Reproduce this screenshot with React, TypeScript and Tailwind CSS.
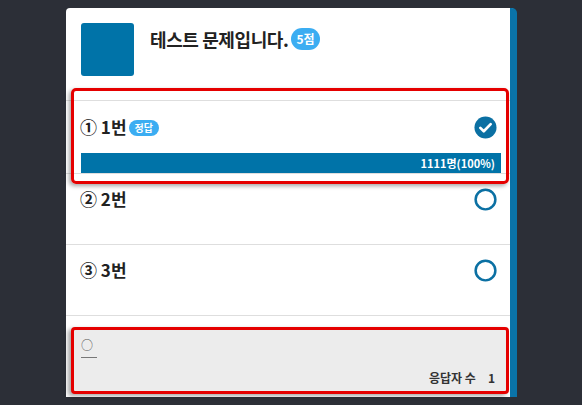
const FONT = { fontFamily: '"Noto Sans CJK KR", "Noto Sans", sans-serif' }

type Option = { no: string; label: string; correct?: boolean; count?: string }

const OPTIONS: Option[] = [
  { no: '①', label: '1번', correct: true, count: '1111명(100%)' },
  { no: '②', label: '2번' },
  { no: '③', label: '3번' },
]

function CheckCircle() {
  return (
    <svg width="23" height="23" viewBox="0 0 24 24">
      <circle cx="12" cy="12" r="11.5" fill="#0b70a3" />
      <path d="M6.6 12.4l3.6 3.5 7.2-7.4" fill="none" stroke="white" strokeWidth="2.8" strokeLinecap="round" strokeLinejoin="round" />
    </svg>
  )
}

function EmptyCircle() {
  return (
    <svg width="23" height="23" viewBox="0 0 24 24">
      <circle cx="12" cy="12" r="10.3" fill="none" stroke="#0b70a3" strokeWidth="2.6" />
    </svg>
  )
}

export default function App() {
  return (
    <div className="w-[582px] h-[405px] bg-[#2c2f37] overflow-hidden pt-[8px] pl-[66px]" style={FONT}>
      <div className="relative w-[451px] h-[389px] bg-white border-r-[7px] border-[#0a73a8] rounded-tl-[4px] rounded-tr-[5px]">
        {/* header */}
        <div className="flex gap-4 pl-[15px] pt-[15px] h-[93px] border-b border-[#dedede]">
          <div className="w-[53px] h-[53px] rounded-[3px] bg-[#0073a8]" />
          <div className="flex items-center gap-[3px] h-[32px]">
            <span className="text-[18px] font-bold text-[#222] tracking-[-0.4px]">테스트 문제입니다.</span>
            <span className="h-[22px] px-[5px] rounded-full bg-[#3badf2] text-white text-[12px] font-bold leading-[22px]">5점</span>
          </div>
        </div>

        {OPTIONS.map(o => (
          <div
            key={o.no}
            className={`pl-[14px] pr-[9px] border-b border-[#dedede] ${o.correct ? 'pt-[14px]' : 'pt-[13px] pb-[33px]'}`}
          >
            <div className="flex items-center h-6 pr-[4px]">
              <span className="text-[17px] font-bold text-[#222]">{o.no} {o.label}</span>
              {o.correct && (
                <span className="ml-[2px] mt-[2px] h-[16px] px-[6px] rounded-full bg-[#3badf2] text-white text-[10px] font-bold leading-[16px]">정답</span>
              )}
              <span className="ml-auto flex">{o.correct ? <CheckCircle /> : <EmptyCircle />}</span>
            </div>
            {o.count && (
              <div className="mt-[14px] ml-[1px] h-[20px] bg-[#0073a8] flex items-center justify-end pr-[6px]">
                <span className="text-white text-[11px] font-bold">{o.count}</span>
              </div>
            )}
          </div>
        ))}

        {/* answer box */}
        <div className="pl-[5px] pt-[11px]">
          <div className="w-[438px] h-[67px] border-[3px] border-[#e50000] rounded-[4px] bg-[#ececec] shadow-[-3px_2px_4px_rgba(0,0,0,0.35)] pl-[7px] pt-[9px] pr-[11px] flex flex-col">
            <span className="text-[12px] leading-[12px] text-[#555]">○</span>
            <div className="mt-[6px] w-[16px] border-b border-[#777]" />
            <div className="mt-auto mb-[4px] flex justify-end gap-[12px] text-[12px] font-bold text-[#333]">
              <span>응답자 수</span>
              <span>1</span>
            </div>
          </div>
        </div>

        {/* highlight overlay on the correct option */}
        <div className="absolute left-[5px] top-[80px] w-[438px] h-[96px] border-[3px] border-[#e50000] rounded-[5px] shadow-[-2px_2px_4px_rgba(0,0,0,0.35)] pointer-events-none" />
      </div>
    </div>
  )
}
